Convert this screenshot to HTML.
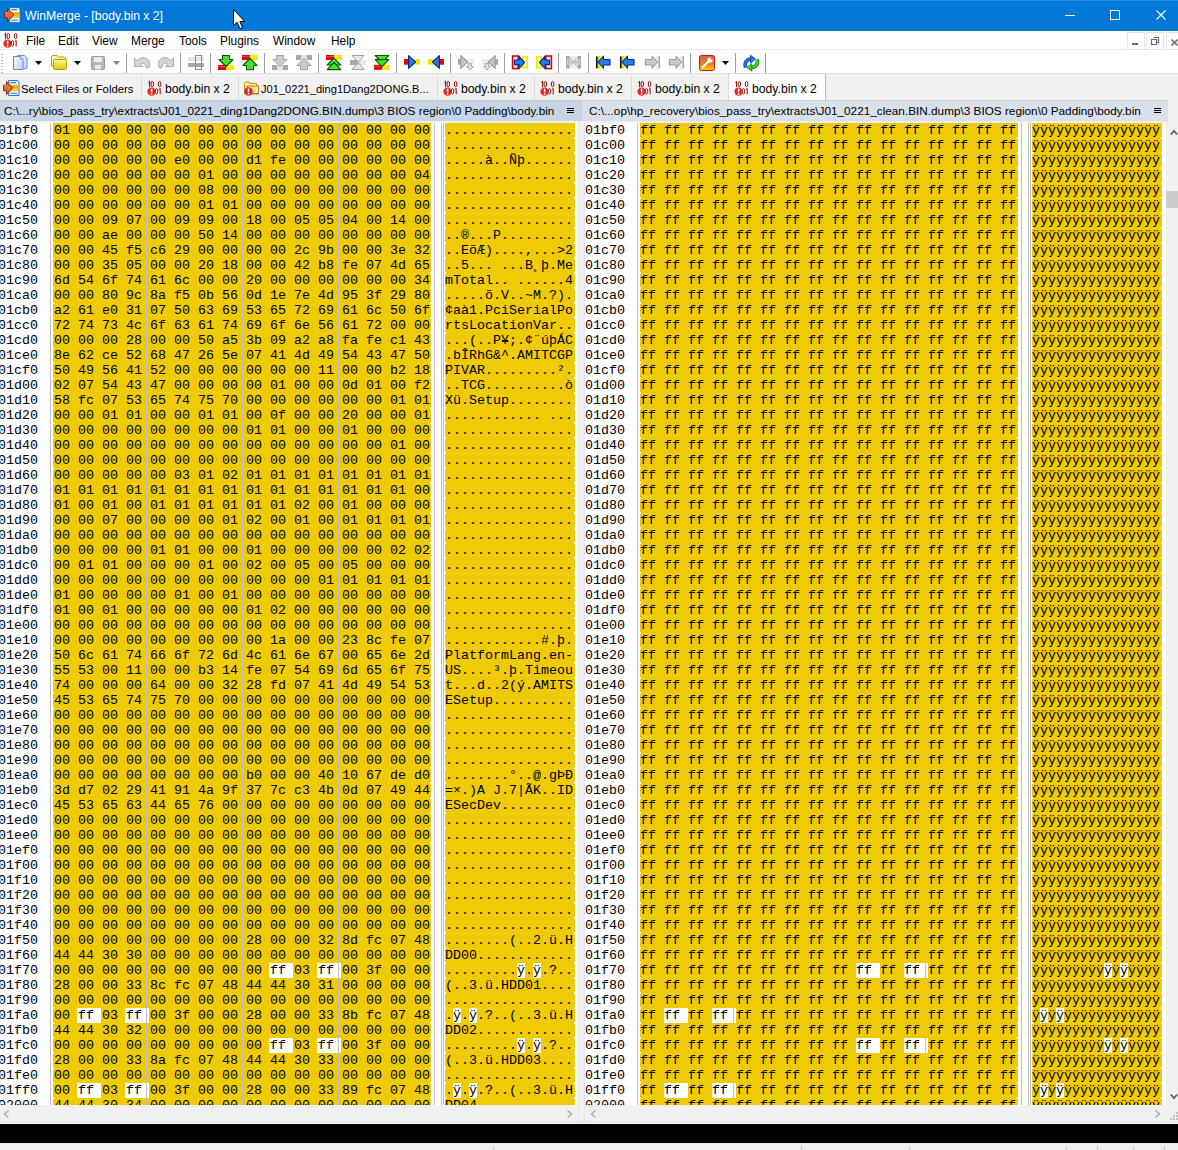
<!DOCTYPE html>
<html><head><meta charset="utf-8"><style>
body{margin:0;width:1178px;height:1150px;overflow:hidden;position:relative;background:#f0f0f0;font-family:"Liberation Sans",sans-serif;}
.a{position:absolute}
svg{overflow:visible}
pre{margin:0}
.t{top:0;font-family:"Liberation Mono",monospace;font-size:13.33px;line-height:15px;color:#000;white-space:pre}
.w{height:15px;background:#fff}
.nt{top:14px;width:1px;height:980px;background:repeating-linear-gradient(#fff 0 2px,transparent 2px 15px)}
.ln{top:0;width:1px;height:1000px;background:#c0c0c0}
.ui{font-family:"Liberation Sans",sans-serif;font-size:12px;line-height:15px;color:#000;white-space:pre}
</style></head><body>
<div class="a" style="left:0;top:0;width:1178px;height:31px;background:#0078d7"></div>
<div class="a" style="left:0;top:0;width:1178px;height:1px;background:#2a8ad8"></div>
<svg class="a" style="left:4px;top:7px" width="16" height="16" viewBox="0 0 16 16"><path d="M5.5 0.5h9l1.5 1.5v13.5h-10.5z" fill="#e6f2fc" stroke="#2a78c8"/><path d="M7 2.6h6M7 13.2h7" stroke="#3a88d0" stroke-width="1.1"/><rect x="6" y="5.2" width="9.5" height="5.4" fill="#f2aa00"/><rect x="6" y="8.6" width="9.5" height="0.9" fill="#f8e080"/><path d="M0.5 5.2h3v-3.6l6.2 6.3-6.2 6.6v-3.8h-3z" fill="#e07028" stroke="#8a1a00" stroke-width="0.9"/><path d="M1 5.8h3" stroke="#f0b090" stroke-width="0.8"/></svg>
<div class="a ui" style="left:25px;top:9px;font-size:12.2px;color:#fff;">WinMerge - [body.bin x 2]</div>
<div class="a" style="left:1065px;top:15px;width:10px;height:1px;background:#fff"></div>
<div class="a" style="left:1110px;top:10px;width:8px;height:8px;border:1px solid #fff"></div>
<svg class="a" style="left:1156px;top:10px" width="10" height="10" viewBox="0 0 10 10"><path d="M0.5 0.5l9 9M9.5 0.5l-9 9" stroke="#fff" stroke-width="1.1"/></svg>
<svg class="a" style="left:233px;top:9px" width="14" height="21" viewBox="0 0 14 21"><path d="M0.5 0.5v16.2l3.6-3.4 2.9 6.3 2.6-1.1-2.8-6h5z" fill="#fff" stroke="#000" stroke-width="1"/></svg>
<div class="a" style="left:0;top:31px;width:1178px;height:18px;background:#fff"></div>
<div class="a" style="left:0;top:49px;width:1178px;height:1px;background:#ececec"></div>
<svg class="a" style="left:3px;top:32px" width="16" height="16" viewBox="0 0 16 16"><g fill="none" stroke="#8b0000" stroke-width="0.95"><path d="M1.2 2.6l1.4-1.3v6"/><ellipse cx="5.3" cy="4.1" rx="1.3" ry="2.7"/><ellipse cx="12.6" cy="4.1" rx="1.3" ry="2.7"/><ellipse cx="9.6" cy="11.2" rx="1.2" ry="2.7"/><path d="M12 9.5l1.2-1.1v6"/></g><circle cx="4.6" cy="11.6" r="4.2" fill="#dc2a2a"/><path d="M4.6 8.6v3.6" stroke="#fff" stroke-width="1.5"/><circle cx="4.6" cy="13.8" r="0.9" fill="#fff"/></svg>
<div class="a ui" style="left:26px;top:34px;font-size:11.9px;color:#000;">File</div>
<div class="a ui" style="left:58px;top:34px;font-size:11.9px;color:#000;">Edit</div>
<div class="a ui" style="left:92px;top:34px;font-size:11.9px;color:#000;">View</div>
<div class="a ui" style="left:131px;top:34px;font-size:11.9px;color:#000;">Merge</div>
<div class="a ui" style="left:179px;top:34px;font-size:11.9px;color:#000;">Tools</div>
<div class="a ui" style="left:220px;top:34px;font-size:11.9px;color:#000;">Plugins</div>
<div class="a ui" style="left:273px;top:34px;font-size:11.9px;color:#000;">Window</div>
<div class="a ui" style="left:331px;top:34px;font-size:11.9px;color:#000;">Help</div>
<div class="a" style="left:1127px;top:32px;width:16px;height:16px;border:1px solid #e4e4e4;background:#fff;box-sizing:border-box;width:18px;height:18px"></div>
<div class="a" style="left:1146px;top:32px;width:16px;height:16px;border:1px solid #e4e4e4;background:#fff;box-sizing:border-box;width:18px;height:18px"></div>
<div class="a" style="left:1166px;top:32px;width:16px;height:16px;border:1px solid #e4e4e4;background:#fff;box-sizing:border-box;width:18px;height:18px"></div>
<div class="a" style="left:1132px;top:43px;width:6px;height:2px;background:#5e6e80"></div>
<svg class="a" style="left:1151px;top:37px" width="9" height="9" viewBox="0 0 9 9"><path d="M2.5 0.5h5v5h-2M0.5 2.5h5v5h-5z" fill="none" stroke="#5e6e80" stroke-width="1.2"/></svg>
<svg class="a" style="left:1171px;top:39px" width="8" height="8" viewBox="0 0 8 8"><path d="M0.5 0.5l6 6M6.5 0.5l-6 6" stroke="#5e6e80" stroke-width="1.6"/></svg>
<div class="a" style="left:0;top:50px;width:1178px;height:24px;background:#fff"></div>
<div class="a" style="left:0;top:73px;width:1178px;height:1px;background:#dcdcdc"></div>
<div class="a" style="left:1px;top:54px;width:2px;height:19px;background:repeating-linear-gradient(#b8b8b8 0 1px,transparent 1px 3px)"></div>
<svg class="a" style="left:12px;top:55px" width="16" height="16" viewBox="0 0 16 16"><defs><linearGradient id="ng" x1="0" y1="0" x2="1" y2="1"><stop offset="0" stop-color="#f4f8fe"/><stop offset="1" stop-color="#bcd2f2"/></linearGradient></defs><path d="M5.5 0.5h7l2.5 2.5v10.5h-9.5z" fill="url(#ng)" stroke="#6a8fd8"/><path d="M1.5 1.5h7l2.5 2.5v10.5h-9.5z" fill="url(#ng)" stroke="#6a8fd8"/><path d="M8.5 1.5v2.5h2.5" fill="#fff" stroke="#6a8fd8"/></svg>
<svg class="a" style="left:51px;top:55px" width="16" height="16" viewBox="0 0 16 16"><defs><linearGradient id="fg" x1="0" y1="0" x2="0" y2="1"><stop offset="0" stop-color="#fbf6b0"/><stop offset="0.5" stop-color="#ece040"/><stop offset="1" stop-color="#dcc800"/></linearGradient></defs><path d="M0.5 1.5l1-1h4.5l1.5 1.5h6l1 1v8h-14z" fill="#f6f0a8" stroke="#b8a000"/><rect x="2.5" y="4.5" width="13" height="10" rx="1" fill="url(#fg)" stroke="#b8a000"/></svg>
<svg class="a" style="left:90px;top:55px" width="16" height="16" viewBox="0 0 16 16"><rect x="1.5" y="1.5" width="13" height="13" rx="1" fill="#b8b8b8" stroke="#9a9a9a"/><rect x="4" y="2" width="8" height="5" fill="#ececec"/><rect x="5" y="10" width="6" height="4.5" fill="#e6e6e6"/></svg>
<svg class="a" style="left:134px;top:55px" width="16" height="16" viewBox="0 0 16 16"><path d="M0.5 3L0.5 11.5L8.5 11.5L6.4 9.4A3 3 0 0 1 11.8 11.2L12.6 13L15 12.4A6.5 6.5 0 0 0 3.4 6Z" fill="#d4d4d4" stroke="#a4a4a4" stroke-width="0.9"/></svg>
<svg class="a" style="left:158px;top:55px" width="16" height="16" viewBox="0 0 16 16"><g transform="matrix(-1 0 0 1 16 0)"><path d="M0.5 3L0.5 11.5L8.5 11.5L6.4 9.4A3 3 0 0 1 11.8 11.2L12.6 13L15 12.4A6.5 6.5 0 0 0 3.4 6Z" fill="#d4d4d4" stroke="#a4a4a4" stroke-width="0.9"/></g></svg>
<svg class="a" style="left:188px;top:55px" width="16" height="16" viewBox="0 0 16 16"><rect x="0" y="2" width="16" height="4" fill="#e4e4e4"/><rect x="0" y="8" width="16" height="4" fill="#a8a8a8"/><rect x="7.5" y="0.5" width="6" height="14" fill="none" stroke="#8c8c8c"/></svg>
<svg class="a" style="left:218px;top:55px" width="16" height="16" viewBox="0 0 16 16"><rect x="0" y="10" width="8" height="5" fill="#e40000"/><rect x="8" y="10" width="8" height="5" fill="#f4e400"/><rect x="0" y="11" width="16" height="0.8" fill="#fff" opacity="0.35"/><path d="M4.5 0.5h7v4h3.5l-7 7-7-7h3.5z" fill="#48e028" stroke="#005800" stroke-width="1.1" stroke-linejoin="round"/></svg>
<svg class="a" style="left:242px;top:55px" width="16" height="16" viewBox="0 0 16 16"><rect x="0" y="0" width="8" height="5" fill="#e40000"/><rect x="8" y="0" width="8" height="5" fill="#f4e400"/><rect x="0" y="1" width="16" height="0.8" fill="#fff" opacity="0.35"/><path d="M4.5 14.8h7v-4.3h3.5l-7-7.2-7 7.2h3.5z" fill="#48e028" stroke="#005800" stroke-width="1.1" stroke-linejoin="round"/></svg>
<svg class="a" style="left:272px;top:55px" width="16" height="16" viewBox="0 0 16 16"><rect x="0" y="10" width="5" height="5" fill="#a8a8a8"/><rect x="11" y="10" width="5" height="5" fill="#a8a8a8"/><rect x="5" y="10" width="6" height="5" fill="#e4e4e4"/><path d="M4.5 0.5h7v4h3.5l-7 7-7-7h3.5z" fill="#cccccc" stroke="#a0a0a0" stroke-width="1"/></svg>
<svg class="a" style="left:296px;top:55px" width="16" height="16" viewBox="0 0 16 16"><rect x="0" y="0" width="5" height="5" fill="#a8a8a8"/><rect x="11" y="0" width="5" height="5" fill="#a8a8a8"/><rect x="5" y="0" width="6" height="5" fill="#e4e4e4"/><path d="M4.5 14.8h7v-4.3h3.5l-7-7.2-7 7.2h3.5z" fill="#cccccc" stroke="#a0a0a0" stroke-width="1"/></svg>
<svg class="a" style="left:326px;top:55px" width="16" height="16" viewBox="0 0 16 16"><rect x="0" y="0" width="8" height="5" fill="#e40000"/><rect x="8" y="0" width="8" height="5" fill="#f4e400"/><rect x="0" y="1" width="16" height="0.8" fill="#fff" opacity="0.35"/><path d="M1.2 10l6.8-6.8 6.8 6.8z" fill="#48e028" stroke="#005800" stroke-width="1.1" stroke-linejoin="round"/><path d="M1.2 14.6l6.8-7.2 6.8 7.2z" fill="#48e028" stroke="#005800" stroke-width="1.1" stroke-linejoin="round"/></svg>
<svg class="a" style="left:350px;top:55px" width="16" height="16" viewBox="0 0 16 16"><rect x="0" y="5" width="8" height="5" fill="#a8a8a8"/><rect x="8" y="5" width="8" height="5" fill="#e8e8e8"/><path d="M2 0.5h12l-6 7 6 7h-12l6-7z" fill="#e0e0e0" fill-opacity="0.7" stroke="#a0a0a0" stroke-width="1"/></svg>
<svg class="a" style="left:374px;top:55px" width="16" height="16" viewBox="0 0 16 16"><rect x="0" y="9.8" width="8" height="5" fill="#e40000"/><rect x="8" y="9.8" width="8" height="5" fill="#f4e400"/><rect x="0" y="10.8" width="16" height="0.8" fill="#fff" opacity="0.35"/><path d="M1.2 0.5l6.8 7 6.8-7z" fill="#48e028" stroke="#005800" stroke-width="1.1" stroke-linejoin="round"/><path d="M1.2 4.6l6.8 7 6.8-7z" fill="#48e028" stroke="#005800" stroke-width="1.1" stroke-linejoin="round"/></svg>
<svg class="a" style="left:404px;top:55px" width="16" height="16" viewBox="0 0 16 16"><rect x="0" y="4" width="5" height="5.7" fill="#e80000"/><rect x="11" y="4" width="5" height="5.7" fill="#f4e800"/><path d="M4.6 0.6v12.8l7-6.4z" fill="#2a7ae6" stroke="#00288a" stroke-width="1.1" stroke-linejoin="round"/></svg>
<svg class="a" style="left:428px;top:55px" width="16" height="16" viewBox="0 0 16 16"><rect x="0" y="4" width="5" height="5.7" fill="#f4e800"/><rect x="11" y="4" width="5" height="5.7" fill="#e80000"/><path d="M11.4 0.6v12.8l-7-6.4z" fill="#2a7ae6" stroke="#00288a" stroke-width="1.1" stroke-linejoin="round"/></svg>
<svg class="a" style="left:458px;top:55px" width="16" height="16" viewBox="0 0 16 16"><rect x="0" y="4" width="3" height="5.7" fill="#a8a8a8"/><rect x="9" y="4" width="7" height="5.7" fill="#ececec"/><path d="M2.8 0.6v12.8l7-6.4z" fill="#c4c4c4" stroke="#9c9c9c" stroke-width="1.1" stroke-linejoin="round"/><path d="M10.5 8.5h3v3h2l-3.5 3.5-3.5-3.5h2z" fill="#e0e0e0" stroke="#a4a4a4" stroke-width="0.9"/></svg>
<svg class="a" style="left:482px;top:55px" width="16" height="16" viewBox="0 0 16 16"><rect x="13" y="4" width="3" height="5.7" fill="#a8a8a8"/><rect x="0" y="4" width="7" height="5.7" fill="#ececec"/><path d="M13.2 0.6v12.8l-7-6.4z" fill="#c4c4c4" stroke="#9c9c9c" stroke-width="1.1" stroke-linejoin="round"/><path d="M3.5 8.5h3v3h2l-3.5 3.5-3.5-3.5h2z" fill="#e0e0e0" stroke="#a4a4a4" stroke-width="0.9"/></svg>
<svg class="a" style="left:512px;top:55px" width="16" height="16" viewBox="0 0 16 16"><rect x="0.6" y="1" width="5.6" height="12.6" fill="#f0f0f0" stroke="#e00000" stroke-width="1.6"/><rect x="10" y="1" width="6" height="12.6" fill="#f4e800"/><rect x="11.5" y="2" width="3" height="10.6" fill="#f8f0a0"/><path d="M2.5 5h4.5v-4l5.5 6.3-5.5 6.3v-4h-4.5z" fill="#2a7ae6" stroke="#00288a" stroke-width="1.1" stroke-linejoin="round"/></svg>
<svg class="a" style="left:536px;top:55px" width="16" height="16" viewBox="0 0 16 16"><rect x="9.8" y="1" width="5.6" height="12.6" fill="#f0f0f0" stroke="#e00000" stroke-width="1.6"/><rect x="0" y="1" width="6" height="12.6" fill="#f4e800"/><rect x="1.5" y="2" width="3" height="10.6" fill="#f8f0a0"/><path d="M13.5 5h-4.5v-4l-5.5 6.3 5.5 6.3v-4h4.5z" fill="#2a7ae6" stroke="#00288a" stroke-width="1.1" stroke-linejoin="round"/></svg>
<svg class="a" style="left:566px;top:55px" width="16" height="16" viewBox="0 0 16 16"><rect x="0" y="1" width="3.5" height="12.6" fill="#a8a8a8"/><rect x="11.5" y="1" width="3.5" height="12.6" fill="#a8a8a8"/><rect x="1" y="4" width="1.5" height="6" fill="#d0d0d0"/><rect x="12.5" y="4" width="1.5" height="6" fill="#d0d0d0"/><rect x="5" y="1" width="5" height="12.6" fill="#ececec"/><path d="M3.5 2l8 10M11.5 2l-8 10" stroke="#b0b0b0" stroke-width="1"/><path d="M3.5 4l3.5 3-3.5 3zM11.5 4l-3.5 3 3.5 3z" fill="#c8c8c8"/></svg>
<svg class="a" style="left:596px;top:55px" width="16" height="16" viewBox="0 0 16 16"><rect x="0" y="1" width="4.5" height="12.7" fill="#f4e800"/><rect x="0" y="1.5" width="1.6" height="11.7" fill="#001050"/><path d="M14 4.5h-6.5v-3.5l-5.5 6 5.5 6.2v-3.2h6.5z" fill="#2a7ae6" stroke="#00288a" stroke-width="1.1" stroke-linejoin="round"/></svg>
<svg class="a" style="left:620px;top:55px" width="16" height="16" viewBox="0 0 16 16"><rect x="0" y="1" width="4.5" height="12.7" fill="#f4e800"/><rect x="0" y="1.5" width="1.6" height="11.7" fill="#001050"/><path d="M14 4.5h-6.5v-3.5l-5.5 6 5.5 6.2v-3.2h6.5z" fill="#2a7ae6" stroke="#00288a" stroke-width="1.1" stroke-linejoin="round"/></svg>
<svg class="a" style="left:645px;top:55px" width="16" height="16" viewBox="0 0 16 16"><rect x="11" y="1" width="4" height="12.7" fill="#ececec"/><rect x="13.6" y="1.5" width="1.4" height="11.7" fill="#a0a0a0"/><path d="M0.5 4.5h6.5v-3.5l5.5 6-5.5 6.2v-3.2h-6.5z" fill="#c8c8c8" stroke="#a0a0a0" stroke-width="1.1" stroke-linejoin="round"/></svg>
<svg class="a" style="left:669px;top:55px" width="16" height="16" viewBox="0 0 16 16"><rect x="11" y="1" width="4" height="12.7" fill="#ececec"/><rect x="13.6" y="1.5" width="1.4" height="11.7" fill="#a0a0a0"/><path d="M0.5 4.5h6.5v-3.5l5.5 6-5.5 6.2v-3.2h-6.5z" fill="#c8c8c8" stroke="#a0a0a0" stroke-width="1.1" stroke-linejoin="round"/></svg>
<svg class="a" style="left:699px;top:55px" width="16" height="16" viewBox="0 0 16 16"><defs><linearGradient id="og" x1="0" y1="0" x2="0" y2="1"><stop offset="0" stop-color="#d06050"/><stop offset="0.6" stop-color="#f08020"/><stop offset="1" stop-color="#f8d800"/></linearGradient></defs><rect x="0.5" y="0.5" width="15" height="15" rx="2" fill="url(#og)" stroke="#b02010"/><path d="M3 13l7-7" stroke="#fff" stroke-width="2.2"/><circle cx="11" cy="5" r="2.6" fill="#fff"/><path d="M11.5 2.5l2 2" stroke="#e86a30" stroke-width="1.5"/></svg>
<svg class="a" style="left:743px;top:55px" width="16" height="16" viewBox="0 0 16 16"><path d="M2.6 12.5C1.2 8 3.5 4 8.2 4" stroke="#0a3cb0" stroke-width="3.6" fill="none"/><path d="M2.6 12.5C1.2 8 3.5 4 8.2 4" stroke="#2a78e8" stroke-width="2" fill="none"/><path d="M7.5 0.3l5 3.8-5 4z" fill="#2a78e8" stroke="#0a3cb0" stroke-width="0.8"/><path d="M14.2 4.5C15.5 9 13 12.5 8.2 12.5" stroke="#0a8a0a" stroke-width="3.6" fill="none"/><path d="M14.2 4.5C15.5 9 13 12.5 8.2 12.5" stroke="#40d030" stroke-width="2" fill="none"/><path d="M8.8 8.6l-5 4 5 3.5z" fill="#40d030" stroke="#0a8a0a" stroke-width="0.8"/></svg>
<svg class="a" style="left:35px;top:61px" width="7" height="4" viewBox="0 0 7 4"><path d="M0 0h7l-3.5 4z" fill="#000"/></svg>
<svg class="a" style="left:74px;top:61px" width="7" height="4" viewBox="0 0 7 4"><path d="M0 0h7l-3.5 4z" fill="#000"/></svg>
<svg class="a" style="left:722px;top:61px" width="7" height="4" viewBox="0 0 7 4"><path d="M0 0h7l-3.5 4z" fill="#000"/></svg>
<svg class="a" style="left:113px;top:61px" width="7" height="4" viewBox="0 0 7 4"><path d="M0 0h7l-3.5 4z" fill="#808080"/></svg>
<div class="a" style="left:126px;top:53px;width:1px;height:20px;background:#a0a0a0"></div>
<div class="a" style="left:180px;top:53px;width:1px;height:20px;background:#a0a0a0"></div>
<div class="a" style="left:210px;top:53px;width:1px;height:20px;background:#a0a0a0"></div>
<div class="a" style="left:264px;top:53px;width:1px;height:20px;background:#a0a0a0"></div>
<div class="a" style="left:318px;top:53px;width:1px;height:20px;background:#a0a0a0"></div>
<div class="a" style="left:396px;top:53px;width:1px;height:20px;background:#a0a0a0"></div>
<div class="a" style="left:450px;top:53px;width:1px;height:20px;background:#a0a0a0"></div>
<div class="a" style="left:504px;top:53px;width:1px;height:20px;background:#a0a0a0"></div>
<div class="a" style="left:558px;top:53px;width:1px;height:20px;background:#a0a0a0"></div>
<div class="a" style="left:588px;top:53px;width:1px;height:20px;background:#a0a0a0"></div>
<div class="a" style="left:690px;top:53px;width:1px;height:20px;background:#a0a0a0"></div>
<div class="a" style="left:735px;top:53px;width:1px;height:20px;background:#a0a0a0"></div>
<div class="a" style="left:765px;top:53px;width:1px;height:20px;background:#a0a0a0"></div>
<div class="a" style="left:0;top:74px;width:1178px;height:26px;background:#f0f0f0"></div>
<div class="a" style="left:728px;top:74px;width:98px;height:26px;background:#fff;border-left:1px solid #dadada;border-right:1px solid #b8b8b8;box-sizing:border-box"></div>
<div class="a" style="left:141px;top:76px;width:1px;height:24px;background:#dadada"></div>
<div class="a" style="left:238px;top:76px;width:1px;height:24px;background:#dadada"></div>
<div class="a" style="left:437px;top:76px;width:1px;height:24px;background:#dadada"></div>
<div class="a" style="left:534px;top:76px;width:1px;height:24px;background:#dadada"></div>
<div class="a" style="left:631px;top:76px;width:1px;height:24px;background:#dadada"></div>
<svg class="a" style="left:3px;top:80px" width="16" height="16" viewBox="0 0 16 16"><path d="M5.5 0.5h9l1.5 1.5v13.5h-10.5z" fill="#e6f2fc" stroke="#2a78c8"/><path d="M7 2.6h6M7 13.2h7" stroke="#3a88d0" stroke-width="1.1"/><rect x="6" y="5.2" width="9.5" height="5.4" fill="#f2aa00"/><rect x="6" y="8.6" width="9.5" height="0.9" fill="#f8e080"/><path d="M0.5 5.2h3v-3.6l6.2 6.3-6.2 6.6v-3.8h-3z" fill="#e07028" stroke="#8a1a00" stroke-width="0.9"/><path d="M1 5.8h3" stroke="#f0b090" stroke-width="0.8"/></svg>
<div class="a ui" style="left:21px;top:82px;font-size:11.3px;color:#000;">Select Files or Folders</div>
<svg class="a" style="left:147px;top:80px" width="16" height="16" viewBox="0 0 16 16"><g fill="none" stroke="#8b0000" stroke-width="0.95"><path d="M1.2 2.6l1.4-1.3v6"/><ellipse cx="5.3" cy="4.1" rx="1.3" ry="2.7"/><ellipse cx="12.6" cy="4.1" rx="1.3" ry="2.7"/><ellipse cx="9.6" cy="11.2" rx="1.2" ry="2.7"/><path d="M12 9.5l1.2-1.1v6"/></g><circle cx="4.6" cy="11.6" r="4.2" fill="#dc2a2a"/><path d="M4.6 8.6v3.6" stroke="#fff" stroke-width="1.5"/><circle cx="4.6" cy="13.8" r="0.9" fill="#fff"/></svg>
<div class="a ui" style="left:165px;top:82px;font-size:12.2px;color:#000;">body.bin x 2</div>
<svg class="a" style="left:244px;top:80px" width="16" height="16" viewBox="0 0 16 16"><path d="M0.5 13.5V3.5l1-1.5h3.5l1 1.5h6.5v10z" fill="#fcf0a0" stroke="#c08a20"/><rect x="3" y="6" width="11.5" height="7.5" fill="#f8e070" stroke="#b8801a"/><rect x="12" y="7" width="1.5" height="6" fill="#fff8b0"/><path d="M4 14.5h11" stroke="#606060" stroke-width="0.8" opacity="0.5"/><circle cx="4.5" cy="11.5" r="4.2" fill="#d42a2a"/><path d="M4.5 8.5v3.6" stroke="#fff" stroke-width="1.5"/><circle cx="4.5" cy="13.7" r="0.9" fill="#fff"/></svg>
<div class="a ui" style="left:261px;top:82px;font-size:11.1px;color:#000;">J01_0221_ding1Dang2DONG.B...</div>
<svg class="a" style="left:443px;top:80px" width="16" height="16" viewBox="0 0 16 16"><g fill="none" stroke="#8b0000" stroke-width="0.95"><path d="M1.2 2.6l1.4-1.3v6"/><ellipse cx="5.3" cy="4.1" rx="1.3" ry="2.7"/><ellipse cx="12.6" cy="4.1" rx="1.3" ry="2.7"/><ellipse cx="9.6" cy="11.2" rx="1.2" ry="2.7"/><path d="M12 9.5l1.2-1.1v6"/></g><circle cx="4.6" cy="11.6" r="4.2" fill="#dc2a2a"/><path d="M4.6 8.6v3.6" stroke="#fff" stroke-width="1.5"/><circle cx="4.6" cy="13.8" r="0.9" fill="#fff"/></svg>
<div class="a ui" style="left:461px;top:82px;font-size:12.2px;color:#000;">body.bin x 2</div>
<svg class="a" style="left:540px;top:80px" width="16" height="16" viewBox="0 0 16 16"><g fill="none" stroke="#8b0000" stroke-width="0.95"><path d="M1.2 2.6l1.4-1.3v6"/><ellipse cx="5.3" cy="4.1" rx="1.3" ry="2.7"/><ellipse cx="12.6" cy="4.1" rx="1.3" ry="2.7"/><ellipse cx="9.6" cy="11.2" rx="1.2" ry="2.7"/><path d="M12 9.5l1.2-1.1v6"/></g><circle cx="4.6" cy="11.6" r="4.2" fill="#dc2a2a"/><path d="M4.6 8.6v3.6" stroke="#fff" stroke-width="1.5"/><circle cx="4.6" cy="13.8" r="0.9" fill="#fff"/></svg>
<div class="a ui" style="left:558px;top:82px;font-size:12.2px;color:#000;">body.bin x 2</div>
<svg class="a" style="left:637px;top:80px" width="16" height="16" viewBox="0 0 16 16"><g fill="none" stroke="#8b0000" stroke-width="0.95"><path d="M1.2 2.6l1.4-1.3v6"/><ellipse cx="5.3" cy="4.1" rx="1.3" ry="2.7"/><ellipse cx="12.6" cy="4.1" rx="1.3" ry="2.7"/><ellipse cx="9.6" cy="11.2" rx="1.2" ry="2.7"/><path d="M12 9.5l1.2-1.1v6"/></g><circle cx="4.6" cy="11.6" r="4.2" fill="#dc2a2a"/><path d="M4.6 8.6v3.6" stroke="#fff" stroke-width="1.5"/><circle cx="4.6" cy="13.8" r="0.9" fill="#fff"/></svg>
<div class="a ui" style="left:655px;top:82px;font-size:12.2px;color:#000;">body.bin x 2</div>
<svg class="a" style="left:734px;top:80px" width="16" height="16" viewBox="0 0 16 16"><g fill="none" stroke="#8b0000" stroke-width="0.95"><path d="M1.2 2.6l1.4-1.3v6"/><ellipse cx="5.3" cy="4.1" rx="1.3" ry="2.7"/><ellipse cx="12.6" cy="4.1" rx="1.3" ry="2.7"/><ellipse cx="9.6" cy="11.2" rx="1.2" ry="2.7"/><path d="M12 9.5l1.2-1.1v6"/></g><circle cx="4.6" cy="11.6" r="4.2" fill="#dc2a2a"/><path d="M4.6 8.6v3.6" stroke="#fff" stroke-width="1.5"/><circle cx="4.6" cy="13.8" r="0.9" fill="#fff"/></svg>
<div class="a ui" style="left:752px;top:82px;font-size:12.2px;color:#000;">body.bin x 2</div>
<div class="a" style="left:0;top:100px;width:581px;height:21px;background:#c6d4e4"></div>
<div class="a" style="left:581px;top:100px;width:587px;height:21px;background:#d9e0e9"></div>
<div class="a" style="left:0;top:100px;width:581px;height:1px;background:#b9c7d7"></div>
<div class="a" style="left:581px;top:100px;width:587px;height:1px;background:#c9d0d9"></div>
<div class="a" style="left:581px;top:100px;width:1px;height:21px;background:#ccd2da"></div>
<div class="a" style="left:0;top:121px;width:1178px;height:2px;background:#f0f0f0"></div>
<div class="a ui" style="left:4px;top:103px;font-size:11.75px;color:#000;">C:\...ry\bios_pass_try\extracts\J01_0221_ding1Dang2DONG.BIN.dump\3 BIOS region\0 Padding\body.bin</div>
<div class="a ui" style="left:589px;top:103px;font-size:11.78px;color:#000;">C:\...op\hp_recovery\bios_pass_try\extracts\J01_0221_clean.BIN.dump\3 BIOS region\0 Padding\body.bin</div>
<svg class="a" style="left:567px;top:108px" width="7" height="6" viewBox="0 0 7 6"><path d="M0 0.5h7M0 2.5h7M0 4.5h7" stroke="#000" stroke-width="1"/></svg>
<svg class="a" style="left:1154px;top:108px" width="7" height="6" viewBox="0 0 7 6"><path d="M0 0.5h7M0 2.5h7M0 4.5h7" stroke="#000" stroke-width="1"/></svg>
<div class="a" style="left:578px;top:121px;width:7px;height:1002px;background:#f0f0f0;border-left:1px solid #e6e6e6;border-right:1px solid #e6e6e6;box-sizing:border-box"></div>
<div class="a" style="left:1166px;top:123px;width:12px;height:982px;background:#f0f0f0"></div>
<svg class="a" style="left:1170px;top:129px" width="8" height="7" viewBox="0 0 8 7"><path d="M0.8 5.5l3.2-3.6 3.2 3.6" fill="none" stroke="#606060" stroke-width="1.8"/></svg>
<div class="a" style="left:1166px;top:191px;width:12px;height:17px;background:#cdcdcd"></div>
<svg class="a" style="left:1170px;top:1093px" width="8" height="7" viewBox="0 0 8 7"><path d="M0.8 1.5l3.2 3.6 3.2-3.6" fill="none" stroke="#606060" stroke-width="1.8"/></svg>
<div class="a" style="left:0;top:1105px;width:1178px;height:17px;background:#f0f0f0"></div>
<div class="a" style="left:578px;top:1105px;width:7px;height:17px;border-left:1px solid #e6e6e6;border-right:1px solid #e6e6e6;box-sizing:border-box"></div>
<div class="a" style="left:0;top:1122px;width:1178px;height:1px;background:#e4e4e4"></div>
<div class="a" style="left:0;top:1123px;width:1178px;height:1px;background:#fafafa"></div>
<svg class="a" style="left:3px;top:1110px" width="8" height="8" viewBox="0 0 8 8"><path d="M5.5 0.5l-4 3.5 4 3.5" fill="none" stroke="#b0b0b0" stroke-width="1.6"/></svg>
<svg class="a" style="left:566px;top:1110px" width="8" height="8" viewBox="0 0 8 8"><path d="M1.5 0.5l4 3.5-4 3.5" fill="none" stroke="#b0b0b0" stroke-width="1.6"/></svg>
<svg class="a" style="left:590px;top:1110px" width="8" height="8" viewBox="0 0 8 8"><path d="M5.5 0.5l-4 3.5 4 3.5" fill="none" stroke="#b0b0b0" stroke-width="1.6"/></svg>
<svg class="a" style="left:1154px;top:1110px" width="8" height="8" viewBox="0 0 8 8"><path d="M1.5 0.5l4 3.5-4 3.5" fill="none" stroke="#b0b0b0" stroke-width="1.6"/></svg>
<svg class="a" style="left:1170px;top:1112px" width="8" height="8" viewBox="0 0 8 8"><path d="M6 0h2v2h-2zM3 3h2v2h-2zM6 3h2v2h-2zM0 6h2v2h-2zM3 6h2v2h-2zM6 6h2v2h-2z" fill="#c0c0c0"/></svg>
<div class="a" style="left:0;top:1124px;width:1178px;height:19px;background:#000"></div>
<div class="a" style="left:0;top:1143px;width:1178px;height:7px;background:#f0f0f0"></div>
<div class="a" style="left:0;top:1143px;width:1178px;height:1px;background:#e6e6e6"></div>
<div class="a" style="left:493px;top:1145px;width:1px;height:5px;background:#d0d0d0"></div>
<div class="a" style="left:801px;top:1145px;width:1px;height:5px;background:#d0d0d0"></div>
<div class="a" style="left:909px;top:1145px;width:1px;height:5px;background:#d0d0d0"></div>
<div class="a" style="left:1066px;top:1145px;width:1px;height:5px;background:#d0d0d0"></div>
<div class="a" style="left:1097px;top:1145px;width:1px;height:5px;background:#d0d0d0"></div>
<div class="a" style="left:1133px;top:1145px;width:1px;height:5px;background:#d0d0d0"></div>
<div class="a" style="left:1164px;top:1145px;width:1px;height:5px;background:#d0d0d0"></div>
<div class="a" style="left:0;top:123px;width:578px;height:982px;overflow:hidden;background:#fff"><div class="a" style="left:-2px;top:0;width:600px;height:990px"><div class="a" style="left:55px;top:0;width:378px;height:990px;background:#efcb05"></div>
<div class="a" style="left:447px;top:0;width:130px;height:990px;background:#efcb05"></div>
<div class="a w" style="left:271px;top:840px;width:24px"></div>
<div class="a w" style="left:519px;top:840px;width:8px"></div>
<div class="a w" style="left:319px;top:840px;width:24px"></div>
<div class="a w" style="left:535px;top:840px;width:8px"></div>
<div class="a w" style="left:79px;top:885px;width:24px"></div>
<div class="a w" style="left:455px;top:885px;width:8px"></div>
<div class="a w" style="left:127px;top:885px;width:24px"></div>
<div class="a w" style="left:471px;top:885px;width:8px"></div>
<div class="a w" style="left:271px;top:915px;width:24px"></div>
<div class="a w" style="left:519px;top:915px;width:8px"></div>
<div class="a w" style="left:319px;top:915px;width:24px"></div>
<div class="a w" style="left:535px;top:915px;width:8px"></div>
<div class="a w" style="left:79px;top:960px;width:24px"></div>
<div class="a w" style="left:455px;top:960px;width:8px"></div>
<div class="a w" style="left:127px;top:960px;width:24px"></div>
<div class="a w" style="left:471px;top:960px;width:8px"></div>
<div class="a nt" style="left:55px"></div>
<div class="a nt" style="left:432px"></div>
<div class="a nt" style="left:447px"></div>
<div class="a nt" style="left:576px"></div>
<div class="a ln" style="left:52px"></div>
<div class="a ln" style="left:148px"></div>
<div class="a ln" style="left:244px"></div>
<div class="a ln" style="left:340px"></div>
<div class="a ln" style="left:436px"></div>
<div class="a ln" style="left:443px"></div>
<div class="a ln" style="left:445px"></div>
<pre class="a t" style="left:0">01bf0
01c00
01c10
01c20
01c30
01c40
01c50
01c60
01c70
01c80
01c90
01ca0
01cb0
01cc0
01cd0
01ce0
01cf0
01d00
01d10
01d20
01d30
01d40
01d50
01d60
01d70
01d80
01d90
01da0
01db0
01dc0
01dd0
01de0
01df0
01e00
01e10
01e20
01e30
01e40
01e50
01e60
01e70
01e80
01e90
01ea0
01eb0
01ec0
01ed0
01ee0
01ef0
01f00
01f10
01f20
01f30
01f40
01f50
01f60
01f70
01f80
01f90
01fa0
01fb0
01fc0
01fd0
01fe0
01ff0
02000</pre>
<pre class="a t" style="left:56px">01 00 00 00 00 00 00 00 00 00 00 00 00 00 00 00
00 00 00 00 00 00 00 00 00 00 00 00 00 00 00 00
00 00 00 00 00 e0 00 00 d1 fe 00 00 00 00 00 00
00 00 00 00 00 00 01 00 00 00 00 00 00 00 00 04
00 00 00 00 00 00 08 00 00 00 00 00 00 00 00 00
00 00 00 00 00 00 01 01 00 00 00 00 00 00 00 00
00 00 09 07 00 09 09 00 18 00 05 05 04 00 14 00
00 00 ae 00 00 00 50 14 00 00 00 00 00 00 00 00
00 00 45 f5 c6 29 00 00 00 00 2c 9b 00 00 3e 32
00 00 35 05 00 00 20 18 00 00 42 b8 fe 07 4d 65
6d 54 6f 74 61 6c 00 00 20 00 00 00 00 00 00 34
00 00 80 9c 8a f5 0b 56 0d 1e 7e 4d 95 3f 29 80
a2 61 e0 31 07 50 63 69 53 65 72 69 61 6c 50 6f
72 74 73 4c 6f 63 61 74 69 6f 6e 56 61 72 00 00
00 00 00 28 00 00 50 a5 3b 09 a2 a8 fa fe c1 43
8e 62 ce 52 68 47 26 5e 07 41 4d 49 54 43 47 50
50 49 56 41 52 00 00 00 00 00 00 11 00 00 b2 18
02 07 54 43 47 00 00 00 00 01 00 00 0d 01 00 f2
58 fc 07 53 65 74 75 70 00 00 00 00 00 00 01 01
00 00 01 01 00 00 01 01 00 0f 00 00 20 00 00 01
00 00 00 00 00 00 00 00 01 01 00 00 01 00 00 00
00 00 00 00 00 00 00 00 00 00 00 00 00 00 01 00
00 00 00 00 00 00 00 00 00 00 00 00 00 00 00 00
00 00 00 00 00 03 01 02 01 01 01 01 01 01 01 01
01 01 01 01 01 01 01 01 01 01 01 01 01 01 01 00
01 00 01 00 01 01 01 01 01 01 02 00 01 00 00 00
00 00 07 00 00 00 00 01 02 00 01 00 01 01 01 01
00 00 00 00 00 00 00 00 00 00 00 00 00 00 00 00
00 00 00 00 01 01 00 00 01 00 00 00 00 00 02 02
00 01 01 00 00 00 01 00 02 00 05 00 05 00 00 00
00 00 00 00 00 00 00 00 00 00 00 01 01 01 01 01
01 00 00 00 00 01 00 01 00 00 00 00 00 00 00 00
01 00 01 00 00 00 00 00 01 02 00 00 00 00 00 00
00 00 00 00 00 00 00 00 00 00 00 00 00 00 00 00
00 00 00 00 00 00 00 00 00 1a 00 00 23 8c fe 07
50 6c 61 74 66 6f 72 6d 4c 61 6e 67 00 65 6e 2d
55 53 00 11 00 00 b3 14 fe 07 54 69 6d 65 6f 75
74 00 00 00 64 00 00 32 28 fd 07 41 4d 49 54 53
45 53 65 74 75 70 00 00 00 00 00 00 00 00 00 00
00 00 00 00 00 00 00 00 00 00 00 00 00 00 00 00
00 00 00 00 00 00 00 00 00 00 00 00 00 00 00 00
00 00 00 00 00 00 00 00 00 00 00 00 00 00 00 00
00 00 00 00 00 00 00 00 00 00 00 00 00 00 00 00
00 00 00 00 00 00 00 00 b0 00 00 40 10 67 de d0
3d d7 02 29 41 91 4a 9f 37 7c c3 4b 0d 07 49 44
45 53 65 63 44 65 76 00 00 00 00 00 00 00 00 00
00 00 00 00 00 00 00 00 00 00 00 00 00 00 00 00
00 00 00 00 00 00 00 00 00 00 00 00 00 00 00 00
00 00 00 00 00 00 00 00 00 00 00 00 00 00 00 00
00 00 00 00 00 00 00 00 00 00 00 00 00 00 00 00
00 00 00 00 00 00 00 00 00 00 00 00 00 00 00 00
00 00 00 00 00 00 00 00 00 00 00 00 00 00 00 00
00 00 00 00 00 00 00 00 00 00 00 00 00 00 00 00
00 00 00 00 00 00 00 00 00 00 00 00 00 00 00 00
00 00 00 00 00 00 00 00 28 00 00 32 8d fc 07 48
44 44 30 30 00 00 00 00 00 00 00 00 00 00 00 00
00 00 00 00 00 00 00 00 00 ff 03 ff 00 3f 00 00
28 00 00 33 8c fc 07 48 44 44 30 31 00 00 00 00
00 00 00 00 00 00 00 00 00 00 00 00 00 00 00 00
00 ff 03 ff 00 3f 00 00 28 00 00 33 8b fc 07 48
44 44 30 32 00 00 00 00 00 00 00 00 00 00 00 00
00 00 00 00 00 00 00 00 00 ff 03 ff 00 3f 00 00
28 00 00 33 8a fc 07 48 44 44 30 33 00 00 00 00
00 00 00 00 00 00 00 00 00 00 00 00 00 00 00 00
00 ff 03 ff 00 3f 00 00 28 00 00 33 89 fc 07 48
44 44 30 34 00 00 00 00 00 00 00 00 00 00 00 00</pre>
<pre class="a t" style="left:447px">................
................
.....à..Ñþ......
................
................
................
................
..®...P.........
..EõÆ)....,...&gt;2
..5... ...B¸þ.Me
mTotal.. ......4
.....õ.V..~M.?).
¢aà1.PciSerialPo
rtsLocationVar..
...(..P¥;.¢¨úþÁC
.bÎRhG&amp;^.AMITCGP
PIVAR.........².
..TCG..........ò
Xü.Setup........
............ ...
................
................
................
................
................
................
................
................
................
................
................
................
................
................
............#.þ.
PlatformLang.en-
US....³.þ.Timeou
t...d..2(ý.AMITS
ESetup..........
................
................
................
................
........°..@.gÞÐ
=×.)A J.7|ÃK..ID
ESecDev.........
................
................
................
................
................
................
................
................
........(..2.ü.H
DD00............
.........ÿ.ÿ.?..
(..3.ü.HDD01....
................
.ÿ.ÿ.?..(..3.ü.H
DD02............
.........ÿ.ÿ.?..
(..3.ü.HDD03....
................
.ÿ.ÿ.?..(..3.ü.H
DD04............</pre></div></div>
<div class="a" style="left:585px;top:123px;width:581px;height:982px;overflow:hidden;background:#fff"><div class="a" style="left:0;top:0;width:600px;height:990px"><div class="a" style="left:55px;top:0;width:378px;height:990px;background:#efcb05"></div>
<div class="a" style="left:447px;top:0;width:130px;height:990px;background:#efcb05"></div>
<div class="a w" style="left:271px;top:840px;width:24px"></div>
<div class="a w" style="left:519px;top:840px;width:8px"></div>
<div class="a w" style="left:319px;top:840px;width:24px"></div>
<div class="a w" style="left:535px;top:840px;width:8px"></div>
<div class="a w" style="left:79px;top:885px;width:24px"></div>
<div class="a w" style="left:455px;top:885px;width:8px"></div>
<div class="a w" style="left:127px;top:885px;width:24px"></div>
<div class="a w" style="left:471px;top:885px;width:8px"></div>
<div class="a w" style="left:271px;top:915px;width:24px"></div>
<div class="a w" style="left:519px;top:915px;width:8px"></div>
<div class="a w" style="left:319px;top:915px;width:24px"></div>
<div class="a w" style="left:535px;top:915px;width:8px"></div>
<div class="a w" style="left:79px;top:960px;width:24px"></div>
<div class="a w" style="left:455px;top:960px;width:8px"></div>
<div class="a w" style="left:127px;top:960px;width:24px"></div>
<div class="a w" style="left:471px;top:960px;width:8px"></div>
<div class="a nt" style="left:55px"></div>
<div class="a nt" style="left:432px"></div>
<div class="a nt" style="left:447px"></div>
<div class="a nt" style="left:576px"></div>
<div class="a ln" style="left:52px"></div>
<div class="a ln" style="left:148px"></div>
<div class="a ln" style="left:244px"></div>
<div class="a ln" style="left:340px"></div>
<div class="a ln" style="left:436px"></div>
<div class="a ln" style="left:443px"></div>
<div class="a ln" style="left:445px"></div>
<pre class="a t" style="left:0">01bf0
01c00
01c10
01c20
01c30
01c40
01c50
01c60
01c70
01c80
01c90
01ca0
01cb0
01cc0
01cd0
01ce0
01cf0
01d00
01d10
01d20
01d30
01d40
01d50
01d60
01d70
01d80
01d90
01da0
01db0
01dc0
01dd0
01de0
01df0
01e00
01e10
01e20
01e30
01e40
01e50
01e60
01e70
01e80
01e90
01ea0
01eb0
01ec0
01ed0
01ee0
01ef0
01f00
01f10
01f20
01f30
01f40
01f50
01f60
01f70
01f80
01f90
01fa0
01fb0
01fc0
01fd0
01fe0
01ff0
02000</pre>
<pre class="a t" style="left:55px">ff ff ff ff ff ff ff ff ff ff ff ff ff ff ff ff
ff ff ff ff ff ff ff ff ff ff ff ff ff ff ff ff
ff ff ff ff ff ff ff ff ff ff ff ff ff ff ff ff
ff ff ff ff ff ff ff ff ff ff ff ff ff ff ff ff
ff ff ff ff ff ff ff ff ff ff ff ff ff ff ff ff
ff ff ff ff ff ff ff ff ff ff ff ff ff ff ff ff
ff ff ff ff ff ff ff ff ff ff ff ff ff ff ff ff
ff ff ff ff ff ff ff ff ff ff ff ff ff ff ff ff
ff ff ff ff ff ff ff ff ff ff ff ff ff ff ff ff
ff ff ff ff ff ff ff ff ff ff ff ff ff ff ff ff
ff ff ff ff ff ff ff ff ff ff ff ff ff ff ff ff
ff ff ff ff ff ff ff ff ff ff ff ff ff ff ff ff
ff ff ff ff ff ff ff ff ff ff ff ff ff ff ff ff
ff ff ff ff ff ff ff ff ff ff ff ff ff ff ff ff
ff ff ff ff ff ff ff ff ff ff ff ff ff ff ff ff
ff ff ff ff ff ff ff ff ff ff ff ff ff ff ff ff
ff ff ff ff ff ff ff ff ff ff ff ff ff ff ff ff
ff ff ff ff ff ff ff ff ff ff ff ff ff ff ff ff
ff ff ff ff ff ff ff ff ff ff ff ff ff ff ff ff
ff ff ff ff ff ff ff ff ff ff ff ff ff ff ff ff
ff ff ff ff ff ff ff ff ff ff ff ff ff ff ff ff
ff ff ff ff ff ff ff ff ff ff ff ff ff ff ff ff
ff ff ff ff ff ff ff ff ff ff ff ff ff ff ff ff
ff ff ff ff ff ff ff ff ff ff ff ff ff ff ff ff
ff ff ff ff ff ff ff ff ff ff ff ff ff ff ff ff
ff ff ff ff ff ff ff ff ff ff ff ff ff ff ff ff
ff ff ff ff ff ff ff ff ff ff ff ff ff ff ff ff
ff ff ff ff ff ff ff ff ff ff ff ff ff ff ff ff
ff ff ff ff ff ff ff ff ff ff ff ff ff ff ff ff
ff ff ff ff ff ff ff ff ff ff ff ff ff ff ff ff
ff ff ff ff ff ff ff ff ff ff ff ff ff ff ff ff
ff ff ff ff ff ff ff ff ff ff ff ff ff ff ff ff
ff ff ff ff ff ff ff ff ff ff ff ff ff ff ff ff
ff ff ff ff ff ff ff ff ff ff ff ff ff ff ff ff
ff ff ff ff ff ff ff ff ff ff ff ff ff ff ff ff
ff ff ff ff ff ff ff ff ff ff ff ff ff ff ff ff
ff ff ff ff ff ff ff ff ff ff ff ff ff ff ff ff
ff ff ff ff ff ff ff ff ff ff ff ff ff ff ff ff
ff ff ff ff ff ff ff ff ff ff ff ff ff ff ff ff
ff ff ff ff ff ff ff ff ff ff ff ff ff ff ff ff
ff ff ff ff ff ff ff ff ff ff ff ff ff ff ff ff
ff ff ff ff ff ff ff ff ff ff ff ff ff ff ff ff
ff ff ff ff ff ff ff ff ff ff ff ff ff ff ff ff
ff ff ff ff ff ff ff ff ff ff ff ff ff ff ff ff
ff ff ff ff ff ff ff ff ff ff ff ff ff ff ff ff
ff ff ff ff ff ff ff ff ff ff ff ff ff ff ff ff
ff ff ff ff ff ff ff ff ff ff ff ff ff ff ff ff
ff ff ff ff ff ff ff ff ff ff ff ff ff ff ff ff
ff ff ff ff ff ff ff ff ff ff ff ff ff ff ff ff
ff ff ff ff ff ff ff ff ff ff ff ff ff ff ff ff
ff ff ff ff ff ff ff ff ff ff ff ff ff ff ff ff
ff ff ff ff ff ff ff ff ff ff ff ff ff ff ff ff
ff ff ff ff ff ff ff ff ff ff ff ff ff ff ff ff
ff ff ff ff ff ff ff ff ff ff ff ff ff ff ff ff
ff ff ff ff ff ff ff ff ff ff ff ff ff ff ff ff
ff ff ff ff ff ff ff ff ff ff ff ff ff ff ff ff
ff ff ff ff ff ff ff ff ff ff ff ff ff ff ff ff
ff ff ff ff ff ff ff ff ff ff ff ff ff ff ff ff
ff ff ff ff ff ff ff ff ff ff ff ff ff ff ff ff
ff ff ff ff ff ff ff ff ff ff ff ff ff ff ff ff
ff ff ff ff ff ff ff ff ff ff ff ff ff ff ff ff
ff ff ff ff ff ff ff ff ff ff ff ff ff ff ff ff
ff ff ff ff ff ff ff ff ff ff ff ff ff ff ff ff
ff ff ff ff ff ff ff ff ff ff ff ff ff ff ff ff
ff ff ff ff ff ff ff ff ff ff ff ff ff ff ff ff
ff ff ff ff ff ff ff ff ff ff ff ff ff ff ff ff</pre>
<pre class="a t" style="left:447px">ÿÿÿÿÿÿÿÿÿÿÿÿÿÿÿÿ
ÿÿÿÿÿÿÿÿÿÿÿÿÿÿÿÿ
ÿÿÿÿÿÿÿÿÿÿÿÿÿÿÿÿ
ÿÿÿÿÿÿÿÿÿÿÿÿÿÿÿÿ
ÿÿÿÿÿÿÿÿÿÿÿÿÿÿÿÿ
ÿÿÿÿÿÿÿÿÿÿÿÿÿÿÿÿ
ÿÿÿÿÿÿÿÿÿÿÿÿÿÿÿÿ
ÿÿÿÿÿÿÿÿÿÿÿÿÿÿÿÿ
ÿÿÿÿÿÿÿÿÿÿÿÿÿÿÿÿ
ÿÿÿÿÿÿÿÿÿÿÿÿÿÿÿÿ
ÿÿÿÿÿÿÿÿÿÿÿÿÿÿÿÿ
ÿÿÿÿÿÿÿÿÿÿÿÿÿÿÿÿ
ÿÿÿÿÿÿÿÿÿÿÿÿÿÿÿÿ
ÿÿÿÿÿÿÿÿÿÿÿÿÿÿÿÿ
ÿÿÿÿÿÿÿÿÿÿÿÿÿÿÿÿ
ÿÿÿÿÿÿÿÿÿÿÿÿÿÿÿÿ
ÿÿÿÿÿÿÿÿÿÿÿÿÿÿÿÿ
ÿÿÿÿÿÿÿÿÿÿÿÿÿÿÿÿ
ÿÿÿÿÿÿÿÿÿÿÿÿÿÿÿÿ
ÿÿÿÿÿÿÿÿÿÿÿÿÿÿÿÿ
ÿÿÿÿÿÿÿÿÿÿÿÿÿÿÿÿ
ÿÿÿÿÿÿÿÿÿÿÿÿÿÿÿÿ
ÿÿÿÿÿÿÿÿÿÿÿÿÿÿÿÿ
ÿÿÿÿÿÿÿÿÿÿÿÿÿÿÿÿ
ÿÿÿÿÿÿÿÿÿÿÿÿÿÿÿÿ
ÿÿÿÿÿÿÿÿÿÿÿÿÿÿÿÿ
ÿÿÿÿÿÿÿÿÿÿÿÿÿÿÿÿ
ÿÿÿÿÿÿÿÿÿÿÿÿÿÿÿÿ
ÿÿÿÿÿÿÿÿÿÿÿÿÿÿÿÿ
ÿÿÿÿÿÿÿÿÿÿÿÿÿÿÿÿ
ÿÿÿÿÿÿÿÿÿÿÿÿÿÿÿÿ
ÿÿÿÿÿÿÿÿÿÿÿÿÿÿÿÿ
ÿÿÿÿÿÿÿÿÿÿÿÿÿÿÿÿ
ÿÿÿÿÿÿÿÿÿÿÿÿÿÿÿÿ
ÿÿÿÿÿÿÿÿÿÿÿÿÿÿÿÿ
ÿÿÿÿÿÿÿÿÿÿÿÿÿÿÿÿ
ÿÿÿÿÿÿÿÿÿÿÿÿÿÿÿÿ
ÿÿÿÿÿÿÿÿÿÿÿÿÿÿÿÿ
ÿÿÿÿÿÿÿÿÿÿÿÿÿÿÿÿ
ÿÿÿÿÿÿÿÿÿÿÿÿÿÿÿÿ
ÿÿÿÿÿÿÿÿÿÿÿÿÿÿÿÿ
ÿÿÿÿÿÿÿÿÿÿÿÿÿÿÿÿ
ÿÿÿÿÿÿÿÿÿÿÿÿÿÿÿÿ
ÿÿÿÿÿÿÿÿÿÿÿÿÿÿÿÿ
ÿÿÿÿÿÿÿÿÿÿÿÿÿÿÿÿ
ÿÿÿÿÿÿÿÿÿÿÿÿÿÿÿÿ
ÿÿÿÿÿÿÿÿÿÿÿÿÿÿÿÿ
ÿÿÿÿÿÿÿÿÿÿÿÿÿÿÿÿ
ÿÿÿÿÿÿÿÿÿÿÿÿÿÿÿÿ
ÿÿÿÿÿÿÿÿÿÿÿÿÿÿÿÿ
ÿÿÿÿÿÿÿÿÿÿÿÿÿÿÿÿ
ÿÿÿÿÿÿÿÿÿÿÿÿÿÿÿÿ
ÿÿÿÿÿÿÿÿÿÿÿÿÿÿÿÿ
ÿÿÿÿÿÿÿÿÿÿÿÿÿÿÿÿ
ÿÿÿÿÿÿÿÿÿÿÿÿÿÿÿÿ
ÿÿÿÿÿÿÿÿÿÿÿÿÿÿÿÿ
ÿÿÿÿÿÿÿÿÿÿÿÿÿÿÿÿ
ÿÿÿÿÿÿÿÿÿÿÿÿÿÿÿÿ
ÿÿÿÿÿÿÿÿÿÿÿÿÿÿÿÿ
ÿÿÿÿÿÿÿÿÿÿÿÿÿÿÿÿ
ÿÿÿÿÿÿÿÿÿÿÿÿÿÿÿÿ
ÿÿÿÿÿÿÿÿÿÿÿÿÿÿÿÿ
ÿÿÿÿÿÿÿÿÿÿÿÿÿÿÿÿ
ÿÿÿÿÿÿÿÿÿÿÿÿÿÿÿÿ
ÿÿÿÿÿÿÿÿÿÿÿÿÿÿÿÿ
ÿÿÿÿÿÿÿÿÿÿÿÿÿÿÿÿ</pre></div></div>
</body></html>
